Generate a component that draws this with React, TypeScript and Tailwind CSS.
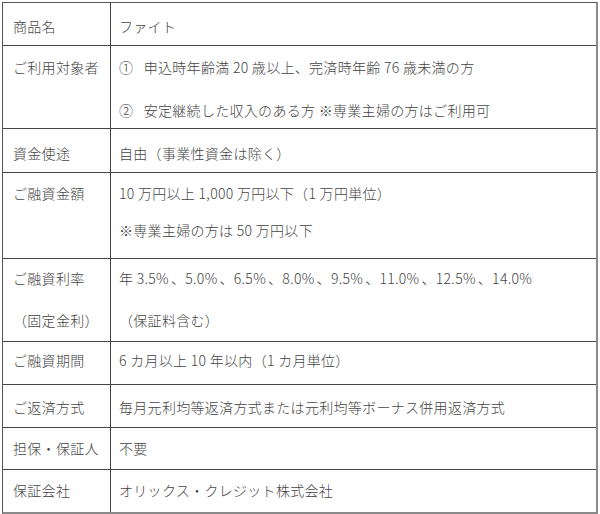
import React from "react";

type Row = {
  h: string;
  pt: string;
  gap: string;
  left: React.ReactNode[];
  right: React.ReactNode[];
  last?: boolean;
};

const P = () => <span className="mr-[2px]">%</span>;

const rateLine = (
  <>
    年 3.5<P />、5.0<P />、6.5<P />、8.0<P />、9.5<P />、11.0<P />、12.5<P />、14.0<P />
  </>
);

const rows: Row[] = [
  { h: "h-[43px]", pt: "pt-[13px]", gap: "mt-0", left: ["商品名"], right: ["ファイト"] },
  {
    h: "h-[83px]",
    pt: "pt-[11px]",
    gap: "mt-[23px]",
    left: ["ご利用対象者"],
    right: [
      "①\u2002\u2009申込時年齢満 20 歳以上、完済時年齢 76 歳未満の方",
      "②\u2002\u2009安定継続した収入のある方 ※専業主婦の方はご利用可",
    ],
  },
  { h: "h-[44px]", pt: "pt-[14px]", gap: "mt-0", left: ["資金使途"], right: ["自由（事業性資金は除く）"] },
  {
    h: "h-[86px]",
    pt: "pt-[10px]",
    gap: "mt-[17px]",
    left: ["ご融資金額"],
    right: ["10 万円以上 1,000 万円以下（1 万円単位）", "※専業主婦の方は 50 万円以下"],
  },
  {
    h: "h-[83px]",
    pt: "pt-[9px]",
    gap: "mt-[22px]",
    left: ["ご融資利率", "（固定金利）"],
    right: [rateLine, "（保証料含む）"],
  },
  { h: "h-[43px]", pt: "pt-[8px]", gap: "mt-0", left: ["ご融資期間"], right: ["6 カ月以上 10 年以内（1 カ月単位）"] },
  { h: "h-[43px]", pt: "pt-[12px]", gap: "mt-0", left: ["ご返済方式"], right: ["毎月元利均等返済方式または元利均等ボーナス併用返済方式"] },
  { h: "h-[42px]", pt: "pt-[10px]", gap: "mt-0", left: ["担保・保証人"], right: ["不要"] },
  { h: "h-[42px]", pt: "pt-[10px]", gap: "mt-0", left: ["保証会社"], right: ["オリックス・クレジット株式会社"], last: true },
];

function Cell({ lines, pt, gap, cls }: { lines: React.ReactNode[]; pt: string; gap: string; cls: string }) {
  return (
    <div className={`${pt} ${cls}`}>
      {lines.map((l, i) => (
        <div key={i} className={`leading-[20px] whitespace-nowrap ${i > 0 ? gap : ""}`}>
          {l}
        </div>
      ))}
    </div>
  );
}

export default function App() {
  return (
    <div className="w-[600px] h-[514px] bg-white pt-[2px] pl-[2px]">
      <div
        className="w-[596px] border-t border-l border-t-[#555] border-l-[#555] border-r-2 border-b-2 border-r-[#8a8a8a] border-b-[#8a8a8a] text-[14px] font-light tracking-[0.3px] text-[#444]"
        style={{ fontFamily: '"Noto Sans CJK JP", "Noto Sans", sans-serif' }}
      >
        {rows.map((r, i) => (
          <div
            key={i}
            className={`flex ${r.h} ${r.last ? "" : "border-b border-b-[#444]"}`}
          >
            <Cell lines={r.left} pt={r.pt} gap={r.gap} cls="w-[108px] shrink-0 pl-[10px] border-r border-r-[#444]" />
            <Cell lines={r.right} pt={r.pt} gap={r.gap} cls="flex-1 pl-[8px]" />
          </div>
        ))}
      </div>
    </div>
  );
}
